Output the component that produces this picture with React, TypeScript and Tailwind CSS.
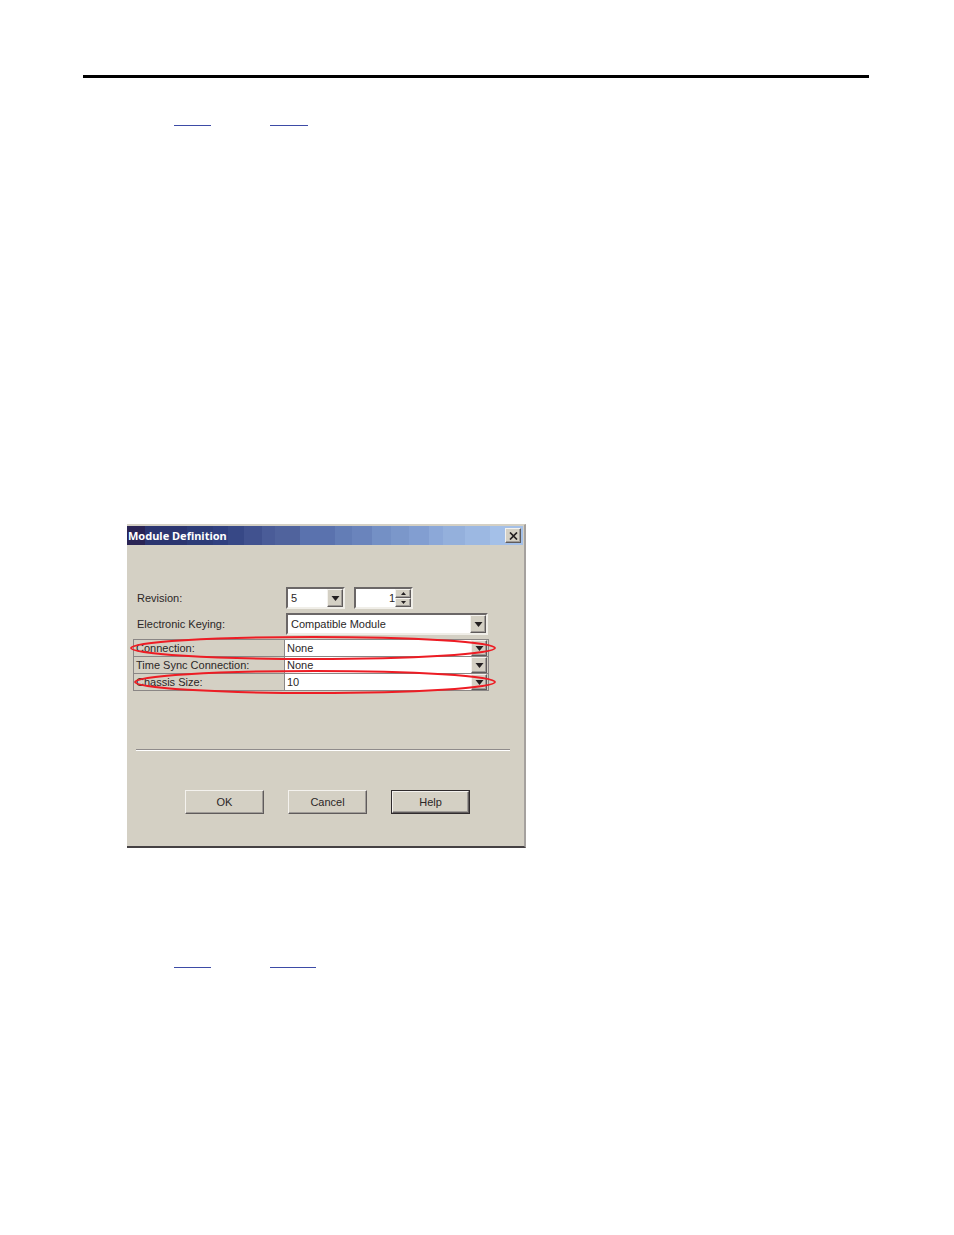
import React, { useState } from 'react';

const TITLE_BANDS = [
  { grow: 'grow-[18]', color: 'bg-[#2a2455]' },
  { grow: 'grow-[42]', color: 'bg-[#2b3570]' },
  { grow: 'grow-[26]', color: 'bg-[#2d3c78]' },
  { grow: 'grow-[15]', color: 'bg-[#304080]' },
  { grow: 'grow-[16]', color: 'bg-[#374886]' },
  { grow: 'grow-[18]', color: 'bg-[#41528f]' },
  { grow: 'grow-[13]', color: 'bg-[#4a5c98]' },
  { grow: 'grow-[25]', color: 'bg-[#50639d]' },
  { grow: 'grow-[36]', color: 'bg-[#5a72ae]' },
  { grow: 'grow-[17]', color: 'bg-[#637db6]' },
  { grow: 'grow-[20]', color: 'bg-[#6a84bc]' },
  { grow: 'grow-[19]', color: 'bg-[#7490c5]' },
  { grow: 'grow-[18]', color: 'bg-[#7b97ca]' },
  { grow: 'grow-[20]', color: 'bg-[#829ed1]' },
  { grow: 'grow-[14]', color: 'bg-[#8ca8d8]' },
  { grow: 'grow-[22]', color: 'bg-[#94b0dc]' },
  { grow: 'grow-[25]', color: 'bg-[#9cb8e2]' },
  { grow: 'grow-[33]', color: 'bg-[#a4c0e8]' },
];

const RAISED = 'bg-[#d4d0c4] border border-t-[#f4f2ee] border-l-[#f4f2ee] border-r-[#5f5b5b] border-b-[#5f5b5b] shadow-[inset_-1px_-1px_0_#a09c98]';
const SUNKEN = 'bg-white border-2 border-t-[#6b6767] border-l-[#6b6767] border-r-[#f0eee8] border-b-[#f0eee8]';

function ArrowDown() {
  return (
    <svg width="9" height="5" viewBox="0 0 9 5" className="block">
      <path d="M.5 0h8L4.5 5z" fill="#231f20" />
    </svg>
  );
}

interface ComboProps {
  id: string;
  value: string;
  options: string[];
  onChange: (value: string) => void;
  className?: string;
}

function Combo({ id, value, options, onChange, className = '' }: ComboProps) {
  return (
    <div className={`relative flex ${className}`}>
      <select
        id={id}
        value={value}
        onChange={(e) => onChange(e.target.value)}
        className="w-full min-w-0 appearance-none bg-transparent pr-5 outline-none"
      >
        {options.map(option => (
          <option key={option}>{option}</option>
        ))}
      </select>
      <span className={`pointer-events-none absolute inset-y-0 right-0 flex w-4 items-center justify-center ${RAISED}`}>
        <ArrowDown />
      </span>
    </div>
  );
}

function RedOval({ className }: { className: string }) {
  return (
    <svg
      viewBox="0 0 366 24"
      preserveAspectRatio="none"
      className={`pointer-events-none absolute -top-1 z-10 h-6 ${className}`}
    >
      <ellipse cx="183" cy="12" rx="182" ry="11" fill="none" stroke="#ed1c24" strokeWidth="2" />
    </svg>
  );
}

function LinkRules({ second }: { second: string }) {
  return (
    <div className="flex pl-[91px]">
      <a href="#" aria-label="Page" className="mr-[59px] h-px w-[37px] bg-[#3d4ba6]" />
      <a href="#" aria-label="Page" className={`h-px bg-[#3d4ba6] ${second}`} />
    </div>
  );
}

export default function App() {
  const [revision, setRevision] = useState('5');
  const [minor, setMinor] = useState(1);
  const [keying, setKeying] = useState('Compatible Module');
  const [connection, setConnection] = useState('None');
  const [timeSync, setTimeSync] = useState('None');
  const [chassis, setChassis] = useState('10');

  const properties = [
    { id: 'connection', label: 'Connection:', value: connection, set: setConnection, options: ['None', 'Rack Optimization'], oval: '-left-1 w-[calc(100%+12px)]' },
    { id: 'time-sync', label: 'Time Sync Connection:', value: timeSync, set: setTimeSync, options: ['None', 'Time Sync and Motion'], oval: '' },
    { id: 'chassis', label: 'Chassis Size:', value: chassis, set: setChassis, options: ['4', '7', '10', '13', '17'], oval: 'left-0 w-[calc(100%+8px)]' },
  ];

  return (
    <main className="min-h-screen bg-white pt-[75px] pr-[85px] pb-16 pl-[83px] font-['Liberation_Sans',Arial,sans-serif] text-[11px] leading-4 text-[#2b2727]">
      <hr className="mb-[47px] h-[3px] border-0 bg-black" />
      <LinkRules second="w-[38px]" />

      <section className="mt-[398px] ml-11 w-full max-w-[399px] border-t border-r-2 border-b-2 border-t-[#d4d0c4] border-r-[#a5a19e] border-b-[#454143] bg-[#d4d0c4]">
        <header className="relative mt-px mr-px flex h-[19px]">
          {TITLE_BANDS.map(band => (
            <span key={band.color} className={`basis-0 ${band.grow} ${band.color}`} />
          ))}
          <div className="absolute inset-0 flex items-center justify-between pr-0.5 pl-px">
            <h1 className="font-['Noto_Sans',Tahoma,sans-serif] font-bold text-white">Module Definition</h1>
            <button aria-label="Close" className={`flex h-[15px] w-4 items-center justify-center ${RAISED}`}>
              <svg width="9" height="8" viewBox="0 0 9 8" className="block">
                <path d="M1 .5l7 7M8 .5l-7 7" stroke="#231f20" strokeWidth="1.7" />
              </svg>
            </button>
          </div>
        </header>

        <div className="px-1.5 pt-[42px]">
          <div className="flex items-center pl-1">
            <label htmlFor="revision" className="w-[149px]">Revision:</label>
            <Combo id="revision" value={revision} options={['4', '5']} onChange={setRevision} className={`mr-[9px] h-[22px] w-[59px] pl-[3px] ${SUNKEN}`} />
            <div className={`flex h-[22px] w-[59px] ${SUNKEN}`}>
              <input
                aria-label="Minor revision"
                value={minor}
                onChange={(e) => setMinor(Number(e.target.value) || 0)}
                className="w-full min-w-0 bg-transparent text-right outline-none"
              />
              <div className="flex w-4 shrink-0 flex-col">
                <button aria-label="Increase" onClick={() => setMinor(minor + 1)} className={`flex w-4 flex-1 items-center justify-center ${RAISED}`}>
                  <svg width="5" height="3" viewBox="0 0 5 3"><path d="M0 3h5L2.5 0z" fill="#231f20" /></svg>
                </button>
                <button aria-label="Decrease" onClick={() => setMinor(Math.max(0, minor - 1))} className={`flex w-4 flex-1 items-center justify-center ${RAISED}`}>
                  <svg width="5" height="3" viewBox="0 0 5 3"><path d="M0 0h5L2.5 3z" fill="#231f20" /></svg>
                </button>
              </div>
            </div>
          </div>

          <div className="mt-1 flex items-center pl-1">
            <label htmlFor="keying" className="w-[149px]">Electronic Keying:</label>
            <Combo id="keying" value={keying} options={['Compatible Module', 'Exact Match', 'Disable Keying']} onChange={setKeying} className={`h-[22px] w-[202px] pl-[3px] ${SUNKEN}`} />
          </div>

          <div className="mt-1 w-[356px] border border-b-0 border-[#8a8685]">
            {properties.map(p => (
              <div key={p.id} className="relative flex h-[17px] border-b border-[#8a8685]">
                <label htmlFor={p.id} className="w-[151px] border-r border-[#8a8685] pl-0.5">{p.label}</label>
                <Combo id={p.id} value={p.value} options={p.options} onChange={p.set} className="mr-px flex-1 bg-white pl-0.5" />
                {p.oval && <RedOval className={p.oval} />}
              </div>
            ))}
          </div>

          <hr className="mt-[58px] mr-2 ml-[3px] h-0.5 border-t border-b border-t-[#8f8b8b] border-b-white" />

          <div className="flex gap-6 pt-[39px] pb-8 pl-[52px]">
            <button className={`h-6 w-[79px] ${RAISED}`}>OK</button>
            <button className={`h-6 w-[79px] ${RAISED}`}>Cancel</button>
            <div className="w-[79px] border border-[#2f2b2d]">
              <button className={`h-[22px] w-full ${RAISED}`}>Help</button>
            </div>
          </div>
        </div>
      </section>

      <div className="pt-[119px]">
        <LinkRules second="w-[46px]" />
      </div>
    </main>
  );
}
